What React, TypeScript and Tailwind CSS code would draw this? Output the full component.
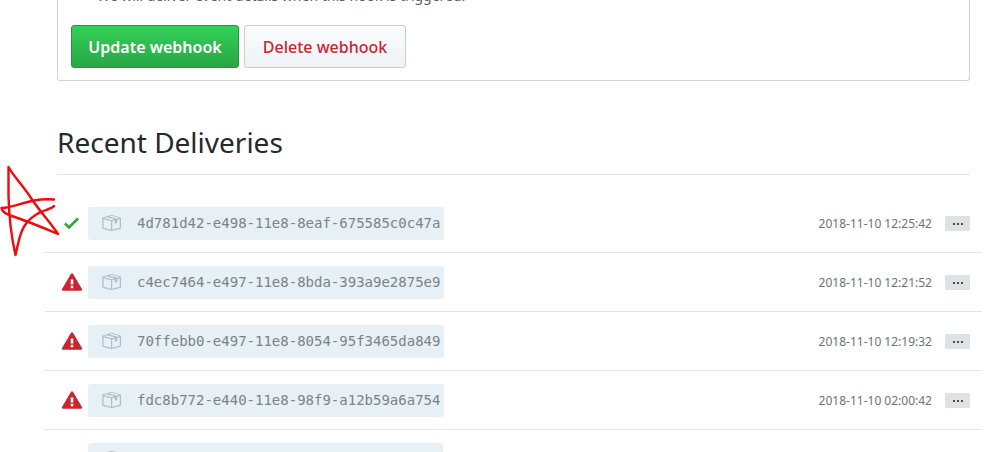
type Delivery = {
  id: string;
  time: string;
  ok: boolean;
};

const deliveries: Delivery[] = [
  { id: '4d781d42-e498-11e8-8eaf-675585c0c47a', time: '2018-11-10 12:25:42', ok: true },
  { id: 'c4ec7464-e497-11e8-8bda-393a9e2875e9', time: '2018-11-10 12:21:52', ok: false },
  { id: '70ffebb0-e497-11e8-8054-95f3465da849', time: '2018-11-10 12:19:32', ok: false },
  { id: 'fdc8b772-e440-11e8-98f9-a12b59a6a754', time: '2018-11-10 02:00:42', ok: false }
];

const CheckIcon = () => (
  <svg className="h-5 w-[15px] fill-[#28a745]" viewBox="0 0 12 16" role="img" aria-label="Delivered">
    <path d="M12 5l-8 8-4-4 1.5-1.5L4 10l6.5-6.5L12 5z" />
  </svg>
);

const AlertIcon = () => (
  <svg className="size-5 fill-[#cb2431]" viewBox="0 0 16 16" role="img" aria-label="Failed">
    <path d="M8.893 1.5c-.183-.31-.52-.5-.887-.5s-.703.19-.886.5L.138 13.499a.98.98 0 000 1.001c.193.31.53.501.886.501h13.964c.367 0 .704-.19.877-.5a1.03 1.03 0 00.01-1.002L8.893 1.5zm.133 11.497H6.987v-2.003h2.039v2.003zm0-3.004H6.987V5.987h2.039v4.006z" />
  </svg>
);

const PackageIcon = () => (
  <svg className="size-5 fill-[#a9bfcc]" viewBox="0 0 16 16" aria-hidden="true">
    <path d="M1 4.27v7.47c0 .45.3.84.75.97l6.5 1.73c.16.05.34.05.5 0l6.5-1.73c.45-.13.75-.52.75-.97V4.27c0-.45-.3-.84-.75-.97l-6.5-1.74a1.4 1.4 0 00-.5 0L1.75 3.3c-.45.13-.75.52-.75.97zm7 9.09l-6-1.59V5l6 1.61v6.75zM2 4l2.5-.67L11 5.06l-2.5.67L2 4zm13 7.77l-6 1.59V6.61l2-.55V8.5l2-.53V5.53L15 5v6.77zm-2-7.24L6.5 2.8l2-.53L15 4l-2 .53z" />
  </svg>
);

const Star = () => (
  <svg
    className="pointer-events-none absolute top-40 left-0 h-[100px] w-[62px] fill-none stroke-[#f00a0a]"
    viewBox="0 0 62 100"
    strokeWidth="2.4"
    strokeLinecap="round"
    strokeLinejoin="round"
    aria-hidden="true">
    <path d="M54 46C52 49 43 50 37 54C24 62 21 71 18 84L15.500 95C12 80 9 55 8.500 36V7C14 17 22 24 31 38C41 53 50 62 58 74C44 68 24 60 9 55C4 53 2 51 1.500 48C12 48 24 42 34 40.500C42 39 48 39 54 39.500" />
  </svg>
);

const DeliveryRow = ({ id, time, ok }: Delivery) => (
  <li className="flex items-center border-b border-[#e1e4e8] px-3 pt-[13px] pb-3">
    <span className="mr-[2px] mb-[2px] flex w-[29px] shrink-0 justify-center">
      {ok ? <CheckIcon /> : <AlertIcon />}
    </span>
    <a
      href={`#${id}`}
      className="flex h-[33px] items-center gap-4 rounded-[3px] bg-[#e7f0f4] pr-1 pb-[2px] pl-[13px] font-['DejaVu_Sans_Mono',monospace] text-sm text-[#7b838a]">
      <PackageIcon />
      {id}
    </a>
    <time className="ml-auto text-xs text-[#6a737d]">{time}</time>
    <button
      type="button"
      aria-label="Show details"
      className="ml-[13px] flex h-[15px] w-[25px] items-center justify-center gap-[2px] rounded-[1px] bg-[#dfe2e5]">
      <span className="size-[2px] bg-[#444d56]" />
      <span className="size-[2px] bg-[#444d56]" />
      <span className="size-[2px] bg-[#444d56]" />
    </button>
  </li>
);

const App = () => {
  return (
    <main className="relative h-screen overflow-hidden bg-white pr-8 pl-[57px] font-['Noto_Sans','Open_Sans',sans-serif] text-[#24292e]">
      <section className="rounded-b-[3px] border border-t-0 border-[#d1d5da] px-[13px] pb-3">
        <p className="-mt-4 pl-[26px] text-sm leading-6 text-[#586069]">
          We will deliver event details when this hook is triggered.
        </p>
        <div className="mt-[17px] flex gap-[5px]">
          <button
            type="button"
            className="h-[43px] min-w-[168px] rounded-[3px] border border-[#2a9142] bg-linear-to-b from-[#34d058] to-[#28a745] px-4 text-base font-semibold text-white">
            Update webhook
          </button>
          <button
            type="button"
            className="h-[43px] min-w-[162px] rounded-[3px] border border-[#c8cdd1] bg-linear-to-b from-[#fafbfc] to-[#eff3f6] px-4 text-base font-medium text-[#cb2431]">
            Delete webhook
          </button>
        </div>
      </section>

      <h2 className="mt-[41px] border-b border-[#e1e4e8] pb-[11px] text-[28px] leading-[41px]">
        Recent Deliveries
      </h2>

      <ul className="-mx-3 mt-[19px]">
        {deliveries.map((delivery) => (
          <DeliveryRow key={delivery.id} {...delivery} />
        ))}
        <li className="flex px-3 pt-[13px]">
          <a
            href="#older"
            aria-label="Older delivery"
            className="ml-[31px] flex h-[33px] w-[355px] items-center rounded-[3px] bg-[#e7f0f4] pb-[2px] pl-[13px]">
            <PackageIcon />
          </a>
        </li>
      </ul>

      <Star />
    </main>
  );
};

export default App;
